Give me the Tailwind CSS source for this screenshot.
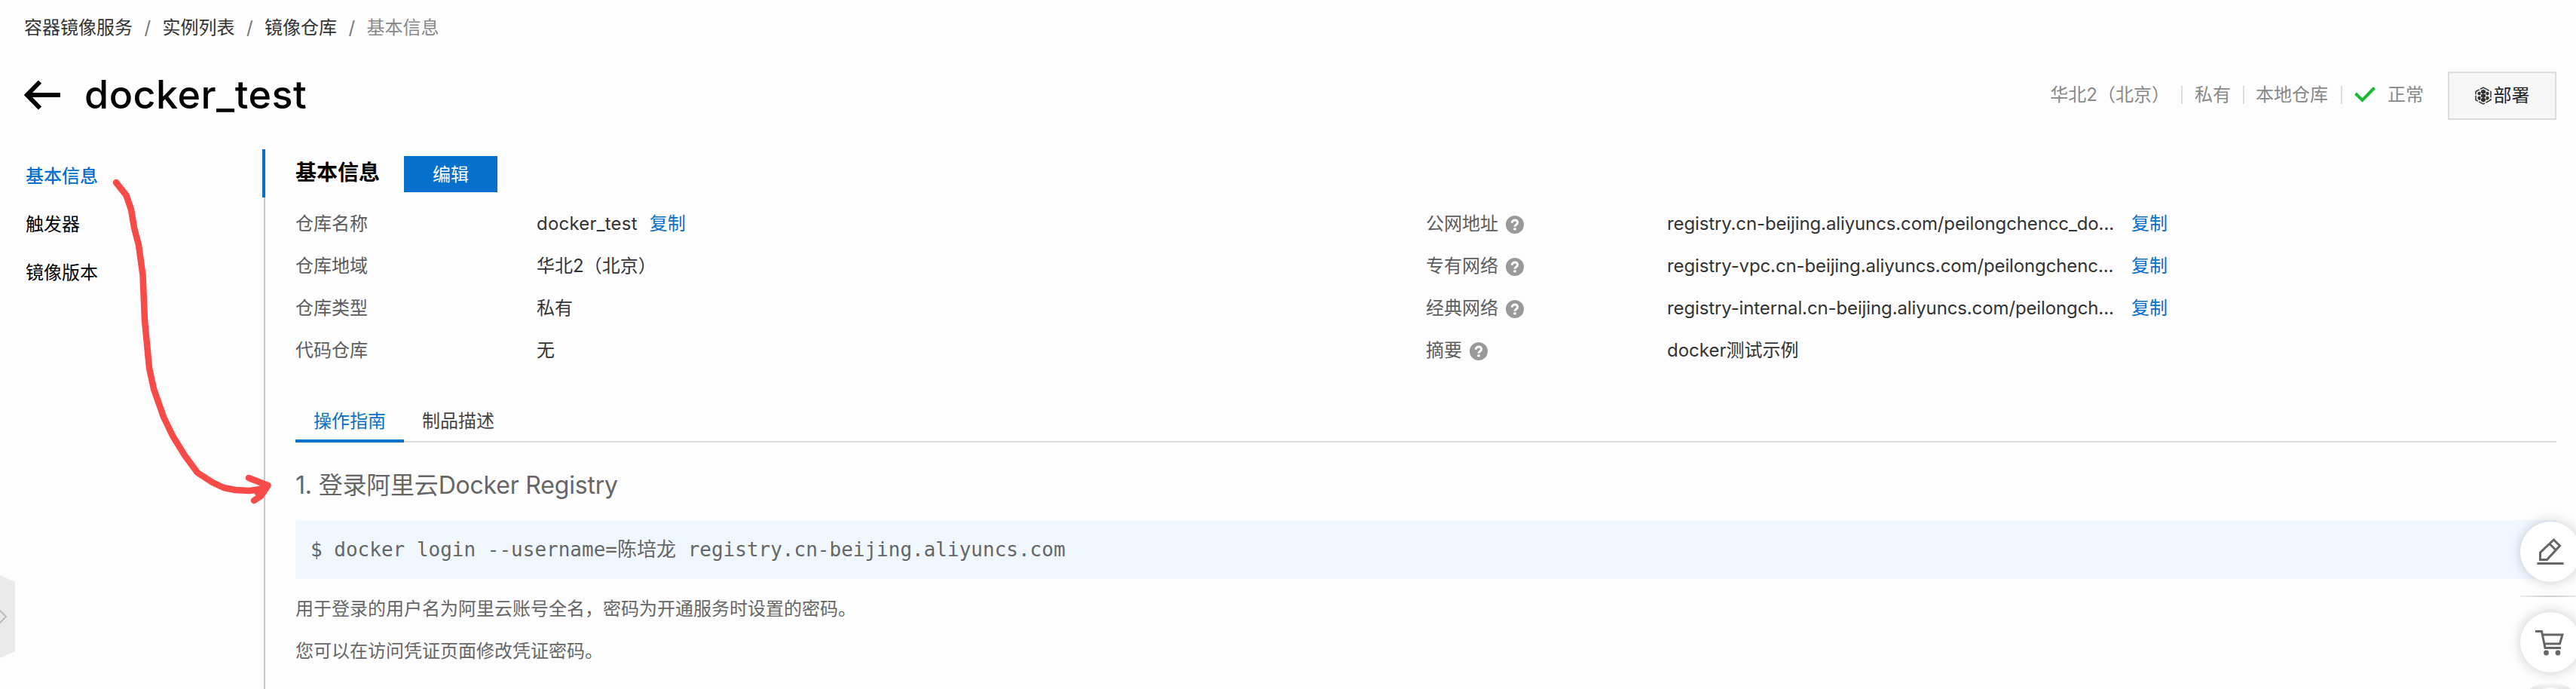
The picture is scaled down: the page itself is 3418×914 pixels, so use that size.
<!DOCTYPE html>
<html lang="zh-CN">
<head>
<meta charset="utf-8">
<title>docker_test</title>
<script src="https://cdn.jsdelivr.net/npm/@tailwindcss/browser@4"></script>
</head>
<body class="bg-[#fdfdfd]">
<div class="relative h-[914px] w-[3418px] overflow-hidden font-['Inter','Noto_Sans_CJK_SC',sans-serif] text-[24px] leading-[36px] text-[#333]">

<nav class="flex h-[72px] items-center pt-[2px] pl-8">
  <span>容器镜像服务</span><span class="w-[39.5px] text-center text-[#777]">/</span>
  <span>实例列表</span><span class="w-[39.5px] text-center text-[#777]">/</span>
  <span>镜像仓库</span><span class="w-[39.5px] text-center text-[#777]">/</span>
  <span class="text-[#888]">基本信息</span>
</nav>

<header class="flex h-[108px] items-center justify-between pr-[26px] pl-8">
  <div class="flex h-[108px] items-center">
    <svg class="mr-[32px] h-[40px] w-[48px]" viewBox="0 0 48 40" fill="none" stroke="#000" stroke-width="6"><path d="M4 20H48M21 2.500L4 20L21 37.500"/></svg>
    <h1 class="text-[52px] leading-[72px] font-medium tracking-[0.5px] text-black">docker_test</h1>
  </div>
  <div class="flex items-center text-[#888]">
    <span>华北2（北京）</span>
    <i class="ml-[15px] h-6 w-[2px] bg-[#ddd]"></i><span class="mx-4">私有</span>
    <i class="h-6 w-[2px] bg-[#ddd]"></i><span class="mr-[17px] ml-[15px]">本地仓库</span>
    <i class="h-6 w-[2px] bg-[#ddd]"></i>
    <svg class="mr-4 ml-4 h-6 w-7" viewBox="0 0 28 24" fill="none" stroke="#1bb934" stroke-width="4"><path d="M1.500 10L10.500 19L26.500 2.500"/></svg>
    <span>正常</span>
    <div class="mt-[1px] ml-8 flex h-[64px] w-[144px] items-center justify-center border-2 border-[#dcdcdc] bg-[#f7f7f7] text-[#222]">
      <svg class="mr-[3px] h-6 w-[22px]" viewBox="0 0 22 24"><path d="M11 1L21 6.500V17.500L11 23L1 17.500V6.500Z" fill="none" stroke="#333" stroke-width="1.500" stroke-dasharray="9 1.500"/><g fill="#333"><path d="M11 3.500L14 5.200V8.200L11 9.900L8 8.200V5.200ZM11 8.800L14 10.500V13.500L11 15.200L8 13.500V10.500ZM11 14.200L14 15.900V18.900L11 20.600L8 18.900V15.900ZM6 6.500L7.500 7.300V10.300L6 11.500L3.500 10.300V7.800ZM16 6.500L14.500 7.300V10.300L16 11.500L18.500 10.300V7.800ZM6 12.500L7.500 13.300V17.300L6 17.900L3.500 16.300V13.500ZM16 12.500L14.500 13.300V17.300L16 17.900L18.500 16.300V13.500Z"/></g></svg>
      <span>部署</span>
    </div>
  </div>
</header>

<div class="flex h-[734px] pt-[18px]">
  <aside class="w-[348px] pl-[34px] text-black">
    <div class="h-16 pt-[18px] font-medium text-[#0670cc]">基本信息</div>
    <div class="h-16 pt-[18px]">触发器</div>
    <div class="h-16 pt-[18px]">镜像版本</div>
  </aside>
  <div class="flex w-1 flex-col items-end"><i class="h-16 w-1 bg-[#0670cc]"></i><i class="w-[2px] flex-1 bg-[#c8c8c8]"></i></div>

  <main class="ml-10 w-[3000px]">
    <div class="flex h-[68px] items-start pt-[9px]">
      <h2 class="mt-[4px] w-[144px] text-[28px] leading-[36px] font-bold text-black">基本信息</h2>
      <button class="h-12 w-[124px] bg-[#0670cc] pt-[1px] text-white">编辑</button>
    </div>

    <div class="grid grid-cols-[1500px_1500px] pt-[3px]">
      <dl class="grid auto-rows-[56px] grid-cols-[320px_1fr] items-center">
        <dt class="text-[#5c5c5c]">仓库名称</dt><dd><span class="tracking-[0.2px]">docker_test</span><span class="ml-4 text-[#0670cc]">复制</span></dd>
        <dt class="text-[#5c5c5c]">仓库地域</dt><dd>华北2（北京）</dd>
        <dt class="text-[#5c5c5c]">仓库类型</dt><dd>私有</dd>
        <dt class="text-[#5c5c5c]">代码仓库</dt><dd>无</dd>
      </dl>
      <dl class="grid auto-rows-[56px] grid-cols-[320px_1fr] items-center">
        <dt class="flex items-center text-[#5c5c5c]">公网地址<svg class="mt-[2px] ml-[10px] size-6" viewBox="0 0 24 24"><circle cx="12" cy="12" r="12" fill="#999"/><path d="M8.300 9.700C8.300 4.800 15.700 4.800 15.700 9.300C15.700 12 12 12 12 14.800" fill="none" stroke="#fff" stroke-width="3"/><path d="M10.300 16.300h3.400v3h-3.400z" fill="#fff"/></svg></dt>
        <dd class="flex"><span class="w-[616px] tracking-[-0.12px]">registry.cn-beijing.aliyuncs.com/peilongchencc_do...</span><span class="text-[#0670cc]">复制</span></dd>
        <dt class="flex items-center text-[#5c5c5c]">专有网络<svg class="mt-[2px] ml-[10px] size-6" viewBox="0 0 24 24"><circle cx="12" cy="12" r="12" fill="#999"/><path d="M8.300 9.700C8.300 4.800 15.700 4.800 15.700 9.300C15.700 12 12 12 12 14.800" fill="none" stroke="#fff" stroke-width="3"/><path d="M10.300 16.300h3.400v3h-3.400z" fill="#fff"/></svg></dt>
        <dd class="flex"><span class="w-[616px] tracking-[-0.12px]">registry-vpc.cn-beijing.aliyuncs.com/peilongchenc...</span><span class="text-[#0670cc]">复制</span></dd>
        <dt class="flex items-center text-[#5c5c5c]">经典网络<svg class="mt-[2px] ml-[10px] size-6" viewBox="0 0 24 24"><circle cx="12" cy="12" r="12" fill="#999"/><path d="M8.300 9.700C8.300 4.800 15.700 4.800 15.700 9.300C15.700 12 12 12 12 14.800" fill="none" stroke="#fff" stroke-width="3"/><path d="M10.300 16.300h3.400v3h-3.400z" fill="#fff"/></svg></dt>
        <dd class="flex"><span class="w-[616px] tracking-[-0.12px]">registry-internal.cn-beijing.aliyuncs.com/peilongch...</span><span class="text-[#0670cc]">复制</span></dd>
        <dt class="flex items-center text-[#5c5c5c]">摘要<svg class="mt-[2px] ml-[10px] size-6" viewBox="0 0 24 24"><circle cx="12" cy="12" r="12" fill="#999"/><path d="M8.300 9.700C8.300 4.800 15.700 4.800 15.700 9.300C15.700 12 12 12 12 14.800" fill="none" stroke="#fff" stroke-width="3"/><path d="M10.300 16.300h3.400v3h-3.400z" fill="#fff"/></svg></dt>
        <dd>docker测试示例</dd>
      </dl>
    </div>

    <div class="mt-[41px] flex h-[53px] border-b-2 border-[#ddd]">
      <div class="h-[53px] w-36 border-b-4 border-[#0670cc] pt-[7px] text-center text-[#0670cc]">操作指南</div>
      <div class="w-36 pt-[7px] text-center text-[#444]">制品描述</div>
    </div>

    <h3 class="mt-[35px] h-[68px] text-[32px] leading-[44px] tracking-[-0.2px] text-[#666]">1. 登录阿里云Docker Registry</h3>
    <pre class="flex h-[78px] items-center bg-[#f0f7ff] pl-5 font-['DejaVu_Sans_Mono','Noto_Sans_CJK_SC',monospace] text-[26px] text-[#666]">$ docker login --username=陈培龙 registry.cn-beijing.aliyuncs.com</pre>
    <p class="mt-[12px] flex h-14 items-center text-[#666]">用于登录的用户名为阿里云账号全名，密码为开通服务时设置的密码。</p>
    <p class="flex h-14 items-center text-[#666]">您可以在访问凭证页面修改凭证密码。</p>
  </main>
</div>

<svg class="absolute top-[760px] left-0 h-[115px] w-5" viewBox="0 0 20 115"><path d="M0 3L20 12V104L0 113Z" fill="#eaeaea"/><path d="M-2 48L8 58L-2 68" fill="none" stroke="#bbb" stroke-width="2"/></svg>

<div class="absolute top-[692px] left-[3344px] flex h-[222px] w-20 flex-col items-center">
  <div class="flex size-20 shrink-0 items-center justify-center rounded-full bg-white shadow-[0_0_16px_rgba(0,0,0,0.2)]">
    <svg class="size-10" viewBox="0 0 40 40" fill="none" stroke="#666" stroke-width="3"><path d="M2.500 35.500H37.500M6.500 30.500V21L24.500 4L32.500 12L15.500 30.500ZM19 9.500L27 17.500"/></svg>
  </div>
  <i class="mt-[18px] h-[2px] w-20 shrink-0 bg-linear-to-r from-[#eee] via-[#c8cdd2] to-[#eee]"></i>
  <div class="mt-5 flex size-20 shrink-0 items-center justify-center rounded-full bg-white shadow-[0_0_16px_rgba(0,0,0,0.2)]">
    <svg class="size-10" viewBox="0 0 40 40" fill="none" stroke="#666" stroke-width="3"><path d="M0 5.500H8.500L13 27.500H34M9 10H36L32.500 22H12"/><circle cx="14.500" cy="34" r="3.400" fill="#666" stroke="none"/><circle cx="30" cy="34" r="3.400" fill="#666" stroke="none"/></svg>
  </div>
  <svg class="mt-1 h-[18px] w-20 shrink-0" viewBox="0 0 80 18"><defs><linearGradient id="fade" x1="0" y1="0" x2="0" y2="1"><stop offset="0" stop-color="#000" stop-opacity="0"/><stop offset="1" stop-color="#000" stop-opacity=".1"/></linearGradient></defs><path d="M12 18Q40 0 68 18Z" fill="url(#fade)"/><path d="M28 18Q40 14.500 52 18Z" fill="#fff"/></svg>
</div>

<svg class="absolute top-[220px] left-[120px] h-[470px] w-[260px]" viewBox="0 0 260 470" fill="none" stroke="#f84b47" stroke-width="8.500" stroke-linecap="round" stroke-linejoin="round"><path d="M34 22L47.500 39L54 58L58 82L64 105L69.500 145L72 205L78 268L84 296L97 333L109 358L125 384L142 407L162 420L177 427L192 430L211 431L225 429L235 424"/><path d="M210 414L235.500 424L226 438L217 444M222 434L234 425"/></svg>
</div>
</body>
</html>
